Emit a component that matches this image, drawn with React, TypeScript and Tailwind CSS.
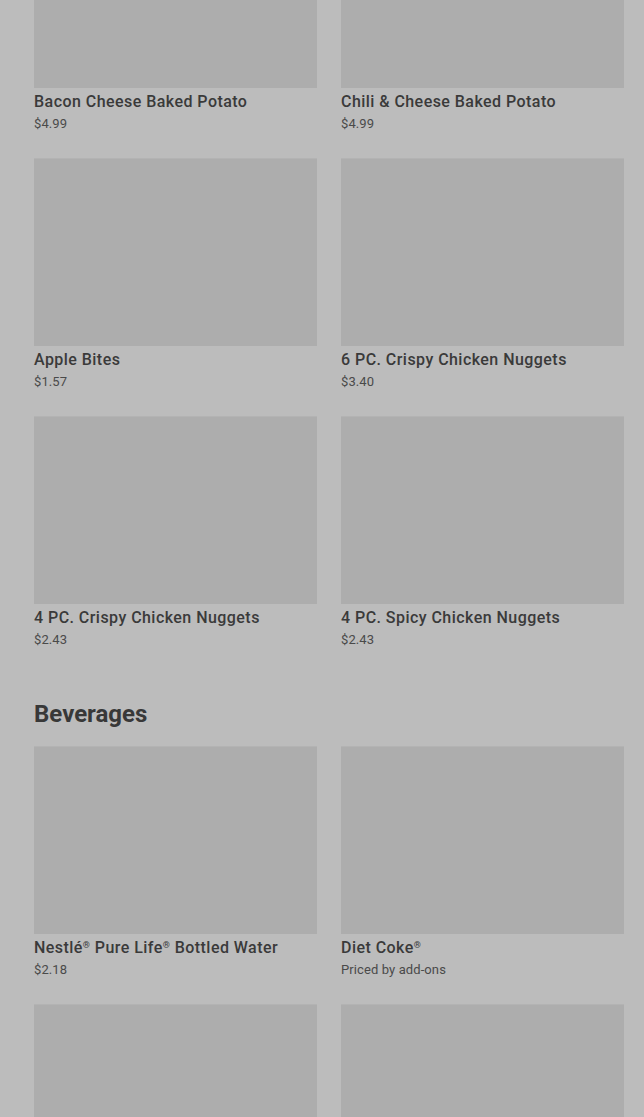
import type { ReactNode } from "react";

const Reg = () => <span className="align-[5px] text-[9px] leading-none">®</span>;

const sides = [
  { name: "Bacon Cheese Baked Potato", price: "$4.99" },
  { name: "Chili & Cheese Baked Potato", price: "$4.99" },
  { name: "Apple Bites", price: "$1.57" },
  { name: "6 PC. Crispy Chicken Nuggets", price: "$3.40" },
  { name: "4 PC. Crispy Chicken Nuggets", price: "$2.43" },
  { name: "4 PC. Spicy Chicken Nuggets", price: "$2.43" },
];

const beverages: { name: ReactNode; price: string }[] = [
  { name: <>Nestlé<Reg /> Pure Life<Reg /> Bottled Water</>, price: "$2.18" },
  { name: <>Diet Coke<Reg /></>, price: "Priced by add-ons" },
  { name: null, price: "" },
  { name: null, price: "" },
];

function MenuCard({ name, price }: { name: ReactNode; price: string }) {
  return (
    <div className="flex flex-col">
      <div className="h-[188px] w-full bg-[#adadad] border-t border-[#b3b3b3]" />
      {name && (
        <div className="pt-[3px]">
          <p className="text-[16px] leading-[22px] font-medium tracking-[0.45px] text-[#3a3a3a]">{name}</p>
          <p className="text-[13px] leading-[20px] pt-[1px] tracking-[0.1px] text-[#4a4a4a]">{price}</p>
        </div>
      )}
    </div>
  );
}

export default function App() {
  return (
    <div
      className="h-[1117px] overflow-hidden bg-[#bcbcbc]"
      style={{ fontFamily: "Roboto, 'Noto Sans', sans-serif" }}
    >
      <div className="-mt-[100px] pl-[34px] pr-[20px]">
        <div className="grid grid-cols-2 gap-x-6 gap-y-6">
          {sides.map((item) => (
            <MenuCard key={item.name} {...item} />
          ))}
        </div>

        <h2 className="mt-12 mb-4 text-[24px] leading-[32px] font-bold text-[#383838]">
          Beverages
        </h2>

        <div className="grid grid-cols-2 gap-x-6 gap-y-6">
          {beverages.map((item, i) => (
            <MenuCard key={i} {...item} />
          ))}
        </div>
      </div>
    </div>
  );
}
